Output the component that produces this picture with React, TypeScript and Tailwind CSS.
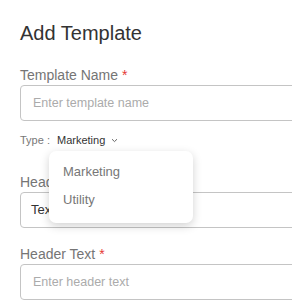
import React from "react"

const labelCls = "text-[14px] leading-[19px] text-[#757575]"
const inputCls =
  "w-[330px] h-[36px] rounded-[4px] border border-[#c4c4c4] bg-white px-[12px] text-[12.5px] text-[#333] placeholder:text-[#ababab] outline-none"

function Label({ text }: { text: string }) {
  return (
    <div className={labelCls}>
      {text} <span className="text-[#e53935]">*</span>
    </div>
  )
}

export default function App() {
  return (
    <div
      className="w-[292px] h-[301px] overflow-hidden bg-white pl-5 pt-[21px]"
      style={{ fontFamily: '"Liberation Sans", Arial, sans-serif' }}
    >
      <h2 className="text-[20px] leading-[24px] text-[#333]">Add Template</h2>

      <div className="mt-[21px]">
        <Label text="Template Name" />
        <input className={inputCls} placeholder="Enter template name" />
      </div>

      <div className="relative mt-[12px] flex items-center text-[11px] leading-[14px]">
        <span className="text-[#777]">Type :</span>
        <span className="ml-[7px] text-[#333]">Marketing</span>
        <svg className="ml-[6px]" width="7" height="5" viewBox="0 0 7 5" fill="none">
          <path d="M1 1.2 L3.5 3.6 L6 1.2" stroke="#666" strokeWidth="1" />
        </svg>

        {/* open type menu */}
        <div className="absolute left-[29px] top-[18px] z-10 w-[144px] h-[72px] rounded-[7px] bg-white pt-[7px] px-[14px] shadow-[0_3px_10px_rgba(0,0,0,0.18)]">
          <div className="text-[13px] leading-[28px] text-[#777]">Marketing</div>
          <div className="text-[13px] leading-[28px] text-[#777]">Utility</div>
        </div>
      </div>

      <div className="mt-[26px]">
        <Label text="Header Type" />
        <div className="flex w-[330px] h-[36px] items-center rounded-[4px] border border-[#c4c4c4] pl-[10px] text-[13px] text-[#333]">
          Text
        </div>
      </div>

      <div className="mt-[17px]">
        <Label text="Header Text" />
        <input className={inputCls} placeholder="Enter header text" />
      </div>
    </div>
  )
}
